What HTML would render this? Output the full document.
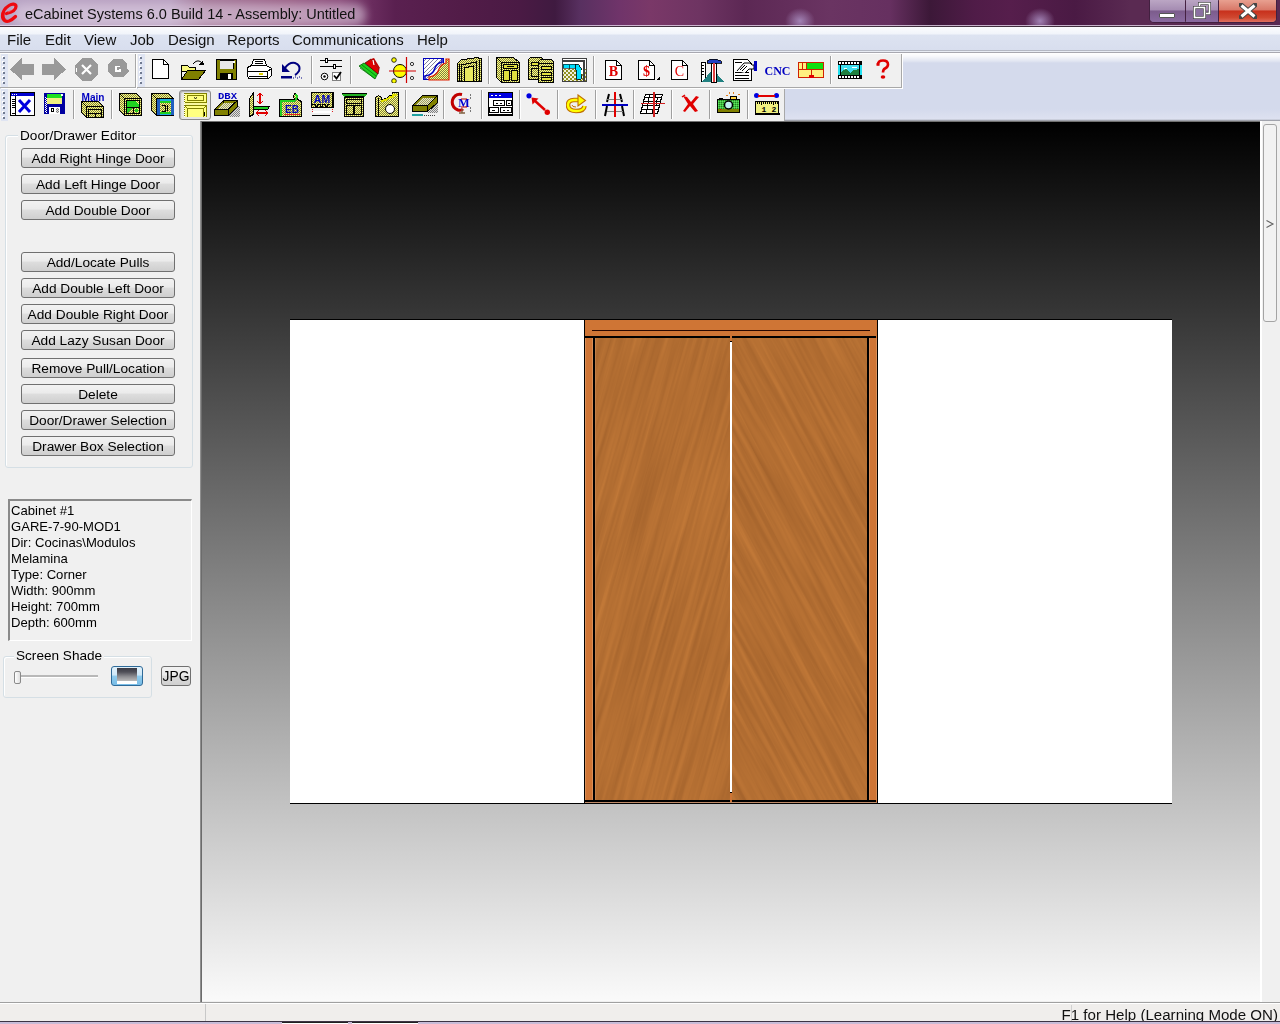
<!DOCTYPE html>
<html><head><meta charset="utf-8"><style>
*{margin:0;padding:0;box-sizing:border-box}
html,body{width:1280px;height:1024px;overflow:hidden;background:#f0f0f0;font-family:"Liberation Sans",sans-serif;position:relative;-webkit-font-smoothing:antialiased}
body>div{will-change:transform}
.a{position:absolute}
#title{left:0;top:0;width:1280px;height:26px;overflow:hidden;
background:linear-gradient(90deg,#b8a4c4 0,#b8a0c0 170px,#a47898 205px,#9a6086 290px,#8a4c7a 340px,#6a2c5e 372px,#5a2050 395px,#521c48 460px,#4a1a44 520px,#3f1a40 555px,#583060 580px,#70346a 620px,#7a3868 650px,#6e3462 700px,#5c2854 745px,#6a3462 830px,#663060 890px,#3c1838 930px,#501c48 975px,#561e4c 1010px,#4a1a44 1075px,#5a2a52 1130px,#5a2a52 1280px);}
#title .glow{left:14px;top:4px;width:352px;height:22px;border-radius:10px;background:rgba(225,212,230,.55);filter:blur(4px)}
#title .spot{top:8px;width:30px;height:26px;border-radius:50%;background:radial-gradient(closest-side,rgba(165,135,185,.95),rgba(165,135,185,0))}
#title .t{left:25px;top:6px;font-size:14.5px;color:#111;white-space:nowrap}
#tline{left:0;top:25px;width:1280px;height:2px;background:linear-gradient(rgba(230,215,235,.8) 0,rgba(230,215,235,.8) 1px,#40303e 1px)}
#menu{left:0;top:27px;width:1280px;height:27px;background:linear-gradient(#fbfcfe 0,#f1f4fa 7px,#dde3f1 8px,#d8deee 23px,#b4b8c4 23px,#b4b8c4 24px,#e8ecf4 24px,#e8ecf4 25px,#a8a8b0 25px,#a8a8b0 26px,#fff 26px)}
#menu span{position:absolute;top:4px;font-size:15px;color:#111;white-space:nowrap}
#rebar{left:0;top:53px;width:1280px;height:69px;background:linear-gradient(#fff 0,#f8f9fc 3px,#e2e6f2 8px,#d4daec 10px,#d4daec 56px,#dde1f0 66px,#b8bcc8 67px,#8a8a90 68px)}
.tb{position:absolute;background:#f0f0f0;border-right:1px solid #a8a8a8;border-bottom:1px solid #a8a8a8;box-shadow:1px 1px 0 #fff}
.grip{position:absolute;left:1px;width:7px;background-color:#dfe4f2;background-image:linear-gradient(135deg,transparent 0,transparent 45%,#6e7890 45%,#6e7890 100%);background-size:2px 2px;background-repeat:no-repeat}
.grip i{position:absolute;left:2px;width:2px;height:2px;background:#707a90;box-shadow:-1px -1px 0 #fff}
.sep{position:absolute;width:1px;background:#a8a8a8;border-right:1px solid #fff;box-sizing:content-box}
#left{left:0;top:121px;width:200px;height:881px;background:#f0f0f0}
#vline{left:200px;top:121px;width:2px;height:881px;background:linear-gradient(90deg,#a0a0a0,#5a5a5a)}
#view{left:202px;top:121px;width:1058px;height:880px;border-top:1px solid #707070;background:linear-gradient(#000 0,#fafafa 100%)}
#sb{left:1260px;top:121px;width:20px;height:881px;background:#f0f0f0;border-left:2px solid #fff}
#thumb{left:1263px;top:124px;width:14px;height:198px;border:1px solid #a4a4a4;border-radius:3px;background:#f2f2f2}
#status{left:0;top:1002px;width:1280px;height:19px;background:linear-gradient(#a0a0a0 0,#a0a0a0 1px,#fff 1px,#fff 2px,#f0eeec 2px);overflow:hidden}
#sbot{left:0;top:1021px;width:1280px;height:3px;background:linear-gradient(#3c3444 0,#3c3444 1px,#c8bcd8 1px)}
#status .t{right:2px;top:4px;font-size:15.1px;color:#111;white-space:nowrap}
.btn{position:absolute;left:21px;width:154px;height:20px;border:1px solid #707070;border-radius:3px;background:linear-gradient(#f2f2f2 0,#ebebeb 45%,#dddddd 50%,#cfcfcf 100%);font-size:13.7px;text-align:center;line-height:19px;color:#000;white-space:nowrap}
.gb{position:absolute;border:1px solid #d5dfe5;border-radius:3px;box-shadow:inset 1px 1px 0 #fff}
.gbl{position:absolute;background:#f0f0f0;font-size:13.6px;padding:0 2px;white-space:nowrap;line-height:15px}
#info{left:8px;top:499px;width:184px;height:142px;border-top:2px solid #8a8a8a;border-left:2px solid #8a8a8a;border-right:1px solid #fff;border-bottom:1px solid #fff;background:#f0f0f0}
#info div{position:absolute;left:1px;font-size:13.1px;white-space:nowrap;line-height:15px}
</style></head><body>
<div id="title" class="a"><div class="glow a"></div><div class="spot a" style="left:785px"></div><div class="spot a" style="left:1025px"></div>
<svg class="a" style="left:0px;top:2px" width="20" height="22" viewBox="0 0 20 22"><path d="M6.5 11.5 C10.5 10.5 16 8 16 4.5 C16 1.5 12 1.5 9 3.5 C5 6 2.5 10 2.5 14 C2.5 18.5 6 20 9 19 C11.5 18 13.5 16.5 15.5 14.5" fill="none" stroke="#ee0a10" stroke-width="3.2" stroke-linecap="round"/><path d="M4 9 C3 12 3 16 5 18" fill="none" stroke="#ee0a10" stroke-width="2.5"/><path d="M8 10 C11 9 13.5 7 13.5 5" fill="none" stroke="#ffd0d0" stroke-width=".6" opacity=".6"/></svg>
<div class="t a">eCabinet Systems 6.0 Build 14 - Assembly: Untitled</div>
<div class="a" style="left:1149px;top:0;width:128px;height:23px;border:1px solid rgba(60,30,60,.8);border-top:none;border-radius:0 0 5px 5px;overflow:hidden;box-shadow:inset 0 0 0 1px rgba(255,255,255,.35)">
<div class="a" style="left:0;top:0;width:35px;height:22px;background:linear-gradient(#bba6c4 0,#a58cb2 45%,#7c5c8c 50%,#8a6aa0 100%)"></div>
<div class="a" style="left:35px;top:0;width:1px;height:22px;background:rgba(60,30,60,.7)"></div>
<div class="a" style="left:36px;top:0;width:32px;height:22px;background:linear-gradient(#bba6c4 0,#a58cb2 45%,#7c5c8c 50%,#8a6aa0 100%)"></div>
<div class="a" style="left:68px;top:0;width:1px;height:22px;background:rgba(60,30,60,.7)"></div>
<div class="a" style="left:69px;top:0;width:59px;height:22px;background:linear-gradient(#e8a090 0,#d87868 45%,#c8301c 50%,#d04830 80%,#e07060 100%)"></div>
<div class="a" style="left:9px;top:13px;width:16px;height:5px;background:#fff;border:1px solid #555;border-radius:1px"></div>
<svg class="a" style="left:43px;top:2px" width="18" height="17"><rect x="6.5" y="1.5" width="10" height="10" fill="none" stroke="#444" stroke-width="3"/><rect x="6.5" y="1.5" width="10" height="10" fill="none" stroke="#fff" stroke-width="1.6"/><rect x="1.5" y="5.5" width="10" height="10" fill="#8a70a0" stroke="#444" stroke-width="3"/><rect x="1.5" y="5.5" width="10" height="10" fill="none" stroke="#fff" stroke-width="1.6"/></svg>
<svg class="a" style="left:89px;top:3px" width="18" height="16"><path d="M2 2 L16 14 M16 2 L2 14" stroke="#444" stroke-width="5" stroke-linecap="square"/><path d="M2.5 2.5 L15.5 13.5 M15.5 2.5 L2.5 13.5" stroke="#fff" stroke-width="3"/></svg>
</div>
</div><div id="tline" class="a"></div>
<div id="menu" class="a"><span style="left:7px">File</span><span style="left:45px">Edit</span><span style="left:84px">View</span><span style="left:130px">Job</span><span style="left:168px">Design</span><span style="left:227px">Reports</span><span style="left:292px">Communications</span><span style="left:417px">Help</span></div>
<div id="rebar" class="a"></div>
<div class="tb" style="left:0;top:54px;width:136px;height:34px"><div class="grip" style="top:0;height:33px;background-image:none"><i style="top:3px"></i><i style="top:8px"></i><i style="top:13px"></i><i style="top:18px"></i><i style="top:23px"></i><i style="top:28px"></i></div></div>
<div class="tb" style="left:137px;top:54px;width:765px;height:34px"><div class="grip" style="top:0;height:33px;background-image:none"><i style="top:3px"></i><i style="top:8px"></i><i style="top:13px"></i><i style="top:18px"></i><i style="top:23px"></i><i style="top:28px"></i></div></div>
<div class="tb" style="left:0;top:89px;width:785px;height:33px;border-bottom:none;box-shadow:none"><div class="grip" style="top:0;height:33px;background-image:none"><i style="top:3px"></i><i style="top:8px"></i><i style="top:13px"></i><i style="top:18px"></i><i style="top:23px"></i><i style="top:28px"></i></div></div>
<svg width="0" height="0" style="position:absolute"><defs>
<pattern id="dy" width="2" height="2" patternUnits="userSpaceOnUse"><rect width="2" height="2" fill="#ffff80"/><rect width="1" height="1" fill="#808040"/><rect x="1" y="1" width="1" height="1" fill="#808040"/></pattern>
<pattern id="dg" width="2" height="2" patternUnits="userSpaceOnUse"><rect width="2" height="2" fill="#e0e0e0"/><rect width="1" height="1" fill="#808080"/><rect x="1" y="1" width="1" height="1" fill="#808080"/></pattern>
<pattern id="do" width="2" height="2" patternUnits="userSpaceOnUse"><rect width="2" height="2" fill="#e8e8c8"/><rect width="1" height="1" fill="#a0a060"/><rect x="1" y="1" width="1" height="1" fill="#a0a060"/></pattern>
<pattern id="dgr" width="2" height="2" patternUnits="userSpaceOnUse"><rect width="2" height="2" fill="#40c040"/><rect width="1" height="1" fill="#208020"/><rect x="1" y="1" width="1" height="1" fill="#60e060"/></pattern>
<pattern id="dbl" width="2" height="2" patternUnits="userSpaceOnUse"><rect width="2" height="2" fill="#ffffff"/><rect width="1" height="1" fill="#0000a0"/><rect x="1" y="1" width="1" height="1" fill="#0000a0"/></pattern>
<pattern id="dco" width="4" height="4" patternUnits="userSpaceOnUse"><rect width="4" height="4" fill="#f0f0e0"/><rect width="2" height="2" fill="#909020"/><rect x="2" y="2" width="2" height="2" fill="#909020"/></pattern>
<pattern id="hatch" width="4" height="4" patternUnits="userSpaceOnUse"><rect width="4" height="4" fill="#fff"/><path d="M0 4 L4 0" stroke="#8080a0" stroke-width="1"/></pattern>
</defs></svg>
<svg class="a" style="left:10px;top:58px" width="25" height="23" viewBox="0 0 25 23" shape-rendering="crispEdges"><path d="M0 11.5 L12 0 V6 H24 V17 H12 V22 Z" fill="#999999"/></svg>
<svg class="a" style="left:42px;top:58px" width="25" height="23" viewBox="0 0 25 23" shape-rendering="crispEdges"><path d="M24 11.5 L12 0 V6 H0 V17 H12 V22 Z" fill="#999999"/></svg>
<svg class="a" style="left:75px;top:58px" width="24" height="24" viewBox="0 0 24 24" shape-rendering="crispEdges"><path d="M7 0 H16 L23 7 V16 L16 23 H7 L0 16 V7 Z" fill="#999999"/><path d="M7 7 L16 16 M16 7 L7 16" stroke="#fff" stroke-width="2.2" style="shape-rendering:auto"/><rect x="1" y="10" width="1" height="4" fill="#fff"/></svg>
<svg class="a" style="left:107px;top:58px" width="23" height="21" viewBox="0 0 23 21" shape-rendering="crispEdges"><path d="M6 1 H15 L20 6 V10 L22 13 L16 19 H6 L1 14 V6 Z" fill="#999999"/><path d="M9 8 H13 V9 H10 V12 H12 V11 H14 V14 H8 V8 Z" fill="#fff"/></svg>
<svg class="a" style="left:152px;top:59px" width="23" height="21" viewBox="0 0 23 21" shape-rendering="crispEdges"><path d="M0.5 0.5 H11.5 L16.5 5.5 V19.5 H0.5 Z" fill="#fff" stroke="#000"/><path d="M11.5 0.5 V5.5 H16.5" fill="none" stroke="#000"/><text x="8.5" y="16" text-anchor="middle" font-family="Liberation Serif" font-weight="bold" font-size="13" fill="#e00000" style="shape-rendering:auto"></text></svg>
<svg class="a" style="left:181px;top:59px" width="25" height="22" viewBox="0 0 25 22" shape-rendering="crispEdges"><path d="M0.5 6.5 H6.5 L8.5 8.5 H14.5 V12.5 H0.5 Z" fill="#f8f880" stroke="#000"/><path d="M0.5 20.5 L6.5 11.5 H24.5 L17.5 20.5 Z" fill="#808000" stroke="#000"/><path d="M0.5 8 V20.5" stroke="#000"/><path d="M12 5 Q16 0 20 3" fill="none" stroke="#000" style="shape-rendering:auto"/><path d="M18 6 L23 6 L22 1 Z" fill="#000"/></svg>
<svg class="a" style="left:216px;top:59px" width="21" height="21" viewBox="0 0 21 21" shape-rendering="crispEdges"><rect x="0.5" y="0.5" width="20" height="20" fill="#808000" stroke="#000"/><rect x="4" y="1" width="13" height="9" fill="#e8e8e8"/><rect x="4" y="1" width="13" height="1" fill="#000"/><rect x="17" y="1" width="1" height="9" fill="#000"/><rect x="4" y="14" width="13" height="7" fill="#000"/><rect x="12" y="15" width="3" height="5" fill="#fff"/><rect x="17" y="2" width="2" height="2" fill="#fff"/></svg>
<svg class="a" style="left:247px;top:59px" width="25" height="21" viewBox="0 0 25 21" shape-rendering="crispEdges"><path d="M6.5 0.5 H17.5 L19.5 6.5 H4.5 Z" fill="#fff" stroke="#000"/><path d="M8 2.5 H16 M8 4.5 H16" stroke="#000"/><path d="M0.5 8.5 L4.5 6.5 H19.5 L24.5 9.5 V16.5 L21.5 19.5 H1.5 L0.5 16.5 Z" fill="#fff" stroke="#000"/><path d="M0.5 12.5 H20.5 L24.5 9.5" fill="none" stroke="#000"/><path d="M20.5 12.5 V19.5" stroke="#000"/><rect x="12" y="14" width="4" height="2" fill="#e0d000"/><path d="M2 17.5 H20" stroke="#000"/></svg>
<svg class="a" style="left:281px;top:61px" width="22" height="19" viewBox="0 0 22 19"><path d="M4 7 Q8 1 14 2 Q20 4 18 10 Q16 13 14 14" fill="none" stroke="#000080" stroke-width="2"/><path d="M1 3 L1 11 L9 11 Z" fill="#000080"/><rect x="0" y="15" width="11" height="2.5" fill="#000080"/><path d="M12 17 h1 M14 16 h1 M16 17 h1 M18 16 h1 M20 17 h1" stroke="#000080" stroke-width="1"/></svg>
<div class="a" style="left:311px;top:56px;width:1px;height:28px;background:#a0a0a0;box-shadow:1px 0 0 #fff"></div>
<svg class="a" style="left:320px;top:58px" width="23" height="23" viewBox="0 0 23 23" shape-rendering="crispEdges"><rect x="0" y="2" width="22" height="1" fill="#000"/><rect x="5.5" y="0.5" width="2" height="4" fill="#fff" stroke="#000"/><rect x="0" y="8" width="22" height="1" fill="#000"/><rect x="13.5" y="6.5" width="2" height="4" fill="#fff" stroke="#000"/><circle cx="4.5" cy="18.5" r="3.3" fill="#fff" stroke="#000" style="shape-rendering:auto"/><circle cx="4.5" cy="18.5" r="1.2" fill="#000" style="shape-rendering:auto"/><rect x="12.5" y="14.5" width="8" height="8" fill="#fff" stroke="#808080"/><path d="M14 17.5 L16.5 20.5 L21 14" fill="none" stroke="#000" stroke-width="1.8" style="shape-rendering:auto"/></svg>
<div class="a" style="left:350px;top:56px;width:1px;height:28px;background:#a0a0a0;box-shadow:1px 0 0 #fff"></div>
<svg class="a" style="left:359px;top:57px" width="22" height="24" viewBox="0 0 22 24"><path d="M0 9 L5 6 L19 16 L16 22 Z" fill="#20d020" stroke="#006000" stroke-width=".8"/><path d="M1 11 L15 21 M3 8 L17 19" stroke="#008000" stroke-width=".8"/><path d="M6 6 L12 2 L20 12 L19 17 Z" fill="#e00000" stroke="#600000" stroke-width=".8"/><path d="M12 2 L15 1 L21 11 L20 12 Z" fill="#c00000"/><path d="M14 3 L15 8" stroke="#fff" stroke-width="1.2"/></svg>
<svg class="a" style="left:389px;top:57px" width="28" height="26" viewBox="0 0 28 26"><circle cx="11" cy="14" r="6.5" fill="#ffff00" stroke="#000" stroke-width="1"/><circle cx="5" cy="3" r="2.3" fill="#ffff00" stroke="#000" stroke-width=".8"/><circle cx="5" cy="24" r="2.3" fill="#ffff00" stroke="#000" stroke-width=".8"/><circle cx="23" cy="7" r="1.6" fill="#fff" stroke="#000" stroke-width=".8"/><circle cx="23" cy="21" r="1.6" fill="#fff" stroke="#000" stroke-width=".8"/><path d="M0 14 H27 M17.5 0 V26" stroke="#d00000" stroke-width="1.2"/></svg>
<svg class="a" style="left:423px;top:58px" width="27" height="23" viewBox="0 0 27 23" shape-rendering="crispEdges"><rect x="0.5" y="0.5" width="20" height="21" fill="url(#hatch)" stroke="#0000c0"/><path d="M2 21 V18 Q10 17 12 10 Q14 5 19 4 V1" fill="none" stroke="#0000c0" stroke-width="1.5" style="shape-rendering:auto"/><path d="M6 22 V19 Q14 18 16 11 Q18 6 23 5 V1 H26 V22 Z" fill="url(#dy)" stroke="#e02000" stroke-width="1.2" style="shape-rendering:auto"/></svg>
<svg class="a" style="left:457px;top:57px" width="25" height="25" viewBox="0 0 25 25" shape-rendering="crispEdges"><path d="M0.5 24.5 V6.5 L4 3 L20 0.5 L24.5 2 V24.5 Z" fill="url(#dy)" stroke="#000"/><path d="M4 24 V8 L19 5 V24" fill="none" stroke="#000"/><path d="M7 24 V11 L16 9 V24 Z" fill="#e8e860" stroke="#000"/><path d="M2 24 V7 M22 24 V3" stroke="#000"/></svg>
<div class="a" style="left:488px;top:56px;width:1px;height:28px;background:#a0a0a0;box-shadow:1px 0 0 #fff"></div>
<svg class="a" style="left:496px;top:57px" width="24" height="26" viewBox="0 0 24 26" shape-rendering="crispEdges"><path d="M0.5 0.5 H17.5 L23.5 5.5 V25.5 H5.5 L0.5 20.5 Z" fill="url(#dy)" stroke="#000"/><path d="M0.5 0.5 L5.5 5.5 H23.5 M5.5 5.5 V25.5" fill="none" stroke="#000"/><rect x="7.5" y="7.5" width="14" height="4" fill="#e0e040" stroke="#000"/><rect x="7.5" y="13.5" width="6" height="10" fill="#e0e040" stroke="#000"/><rect x="15.5" y="13.5" width="6" height="10" fill="#e0e040" stroke="#000"/><path d="M11 9.5 H18" stroke="#000"/></svg>
<svg class="a" style="left:528px;top:57px" width="26" height="26" viewBox="0 0 26 26" shape-rendering="crispEdges"><path d="M0.5 2.5 L2.5 0.5 H13.5 L15.5 2.5 V22.5 H0.5 Z" fill="url(#dy)" stroke="#000"/><rect x="3.5" y="5.5" width="9" height="3" fill="#e0e040" stroke="#000"/><rect x="3.5" y="11.5" width="9" height="8" fill="url(#dy)" stroke="#000"/><path d="M10.5 4.5 L12.5 2.5 H23.5 L25.5 4.5 V25.5 H10.5 Z" fill="url(#dy)" stroke="#000"/><path d="M10.5 6.5 H25.5" stroke="#000"/><rect x="13.5" y="9.5" width="10" height="3" fill="#e0e040" stroke="#000"/><rect x="13.5" y="15.5" width="10" height="3" fill="#e0e040" stroke="#000"/><rect x="13.5" y="20.5" width="10" height="3" fill="#e0e040" stroke="#000"/></svg>
<svg class="a" style="left:562px;top:58px" width="25" height="24" viewBox="0 0 25 24" shape-rendering="crispEdges"><rect x="0" y="0" width="25" height="24" fill="url(#dco)"/><rect x="0" y="0" width="25" height="11" fill="#fff"/><rect x="0.5" y="0.5" width="24" height="23" fill="none" stroke="#404040"/><rect x="1" y="2" width="22" height="2" fill="#404040"/><rect x="21" y="2" width="2" height="21" fill="#404040"/><rect x="1" y="6" width="6" height="4" fill="#00e0ff" stroke="#000" stroke-width=".6"/><rect x="7" y="6" width="6" height="4" fill="#00e0ff" stroke="#000" stroke-width=".6"/><path d="M13 6 H16 L19 10 V21 H14 V12 L13 10 Z" fill="#00e0ff" stroke="#000" stroke-width=".8"/><rect x="2" y="4" width="4" height="2" fill="#fff"/><rect x="8" y="4" width="4" height="2" fill="#fff"/><rect x="19" y="12" width="2" height="4" fill="#fff"/></svg>
<div class="a" style="left:593px;top:56px;width:1px;height:28px;background:#a0a0a0;box-shadow:1px 0 0 #fff"></div>
<svg class="a" style="left:605px;top:60px" width="23" height="21" viewBox="0 0 23 21" shape-rendering="crispEdges"><path d="M0.5 0.5 H11.5 L16.5 5.5 V19.5 H0.5 Z" fill="#fff" stroke="#000"/><path d="M11.5 0.5 V5.5 H16.5" fill="none" stroke="#000"/><text x="8.5" y="16" text-anchor="middle" font-family="Liberation Serif" font-weight="bold" font-size="14" fill="#e00000" style="shape-rendering:auto">B</text></svg>
<svg class="a" style="left:638px;top:60px" width="23" height="21" viewBox="0 0 23 21" shape-rendering="crispEdges"><path d="M0.5 0.5 H11.5 L16.5 5.5 V19.5 H0.5 Z" fill="#fff" stroke="#000"/><path d="M11.5 0.5 V5.5 H16.5" fill="none" stroke="#000"/><text x="8.5" y="16" text-anchor="middle" font-family="Liberation Serif" font-weight="bold" font-size="14" fill="#e00000" style="shape-rendering:auto">$</text><path d="M18 20 L22 16 L22 20 Z" fill="#000"/></svg>
<svg class="a" style="left:671px;top:60px" width="23" height="21" viewBox="0 0 23 21" shape-rendering="crispEdges"><path d="M0.5 0.5 H11.5 L16.5 5.5 V19.5 H0.5 Z" fill="#fff" stroke="#000"/><path d="M11.5 0.5 V5.5 H16.5" fill="none" stroke="#000"/><text x="8.5" y="16" text-anchor="middle" font-family="Liberation Serif" font-weight="normal" font-size="14" fill="#e00000" style="shape-rendering:auto">C</text></svg>
<svg class="a" style="left:701px;top:58px" width="24" height="25" viewBox="0 0 24 25" shape-rendering="crispEdges"><path d="M0.5 4.5 H4.5 V19.5 H16.5 V23.5 H0.5 Z" fill="#fff" stroke="#000"/><path d="M1 7 h2 M1 10 h2 M1 13 h2 M1 16 h2 M6 21 v2 M9 21 v2 M12 21 v2" stroke="#000"/><path d="M1 24 L12 11 L23 24 Z" fill="#208080"/><path d="M6 3 Q12 -1 20 3 L21 5 H6 Z" fill="#2040c0" stroke="#000" stroke-width=".8"/><rect x="10.5" y="5" width="5" height="19" fill="#fff" stroke="#000"/><rect x="12" y="5" width="2" height="19" fill="#e04040"/></svg>
<svg class="a" style="left:733px;top:59px" width="25" height="23" viewBox="0 0 25 23" shape-rendering="crispEdges"><path d="M0.5 0.5 H14.5 L18.5 4.5 V21.5 H0.5 Z" fill="#fff" stroke="#000"/><path d="M2 3.5 H9 M2 13.5 H16 M2 16.5 H16 M2 19.5 H16" stroke="#000"/><path d="M4 12 L11 4 H17 L19 6 H21 V10 H16 L12 14" fill="#fff" stroke="#000" style="shape-rendering:auto"/><path d="M7 11 L12 6 M9 12 L14 7" stroke="#000" style="shape-rendering:auto"/><rect x="21" y="2" width="3" height="10" fill="#0000c0"/></svg>
<svg class="a" style="left:764px;top:63px" width="28" height="14" viewBox="0 0 28 14"><text x="0.5" y="11.5" font-family="Liberation Serif" font-weight="bold" font-size="12.5" fill="#0000c0" textLength="26" lengthAdjust="spacingAndGlyphs">CNC</text></svg>
<svg class="a" style="left:798px;top:62px" width="26" height="17" viewBox="0 0 26 17" shape-rendering="crispEdges"><rect x="0.5" y="0.5" width="25" height="15" fill="#fff080" stroke="#d02000"/><rect x="9" y="1" width="16" height="6" fill="#10e010"/><path d="M0.5 7.5 H25.5 M4.5 0.5 V7.5 M8.5 0.5 V7.5 M13.5 7.5 V13" stroke="#d02000"/><rect x="11" y="13" width="5" height="3" fill="#e00000"/></svg>
<div class="a" style="left:830px;top:56px;width:1px;height:28px;background:#a0a0a0;box-shadow:1px 0 0 #fff"></div>
<svg class="a" style="left:838px;top:61px" width="24" height="18" viewBox="0 0 24 18" shape-rendering="crispEdges"><rect x="0" y="0" width="24" height="18" fill="#000"/><g fill="#fff"><rect x="1" y="1" width="2" height="2"/><rect x="4" y="1" width="2" height="2"/><rect x="7" y="1" width="2" height="2"/><rect x="10" y="1" width="2" height="2"/><rect x="13" y="1" width="2" height="2"/><rect x="16" y="1" width="2" height="2"/><rect x="19" y="1" width="2" height="2"/><rect x="1" y="15" width="2" height="2"/><rect x="4" y="15" width="2" height="2"/><rect x="7" y="15" width="2" height="2"/><rect x="10" y="15" width="2" height="2"/><rect x="13" y="15" width="2" height="2"/><rect x="16" y="15" width="2" height="2"/><rect x="19" y="15" width="2" height="2"/></g><rect x="0" y="4" width="24" height="10" fill="#20e0f0"/><rect x="3" y="4" width="18" height="10" fill="#40e0f0"/><path d="M3 14 L3 11 L8 8 L12 12 L16 9 L21 8 V14 Z" fill="#208040"/><path d="M6 7 H9 M14 6 H19" stroke="#fff"/><rect x="21" y="4" width="1" height="10" fill="#000"/><rect x="2" y="4" width="1" height="10" fill="#000"/></svg>
<svg class="a" style="left:876px;top:59px" width="15" height="21" viewBox="0 0 15 21"><path d="M2 5.5 Q2 1.5 7 1.5 Q12 1.5 12 5.5 Q12 8 9 9.5 Q7 10.5 7 13.5" fill="none" stroke="#e00000" stroke-width="2.6"/><ellipse cx="7" cy="18" rx="2.3" ry="1.8" fill="#e00000"/><path d="M0.5 5.5 h3" stroke="#e00000" stroke-width="2.6"/></svg>
<svg class="a" style="left:10px;top:92px" width="25" height="24" viewBox="0 0 25 24" shape-rendering="crispEdges"><rect x="0.5" y="0.5" width="24" height="23" fill="#fff" stroke="#000"/><rect x="1" y="1" width="23" height="3" fill="#0000d0"/><g fill="#fff"><rect x="2" y="2" width="1" height="1"/><rect x="4" y="2" width="1" height="1"/><rect x="6" y="2" width="1" height="1"/></g><path d="M5.5 4 V23" stroke="#000"/><path d="M2 7 h3 M2 9 h3 M2 11 h3 M2 13 h3 M2 15 h3 M2 21 h3" stroke="#000"/><path d="M9 8 L20 20 M20 8 L9 20" stroke="#0000e0" stroke-width="3" style="shape-rendering:auto"/></svg>
<svg class="a" style="left:44px;top:93px" width="21" height="21" viewBox="0 0 21 21" shape-rendering="crispEdges"><rect x="0" y="0" width="21" height="21" fill="#0000a0"/><rect x="3" y="1" width="15" height="10" fill="#f0f080"/><rect x="3" y="1" width="15" height="4" fill="#20e020"/><rect x="17" y="1" width="2" height="2" fill="#fff"/><rect x="5" y="14" width="11" height="7" fill="#fff"/><rect x="7" y="15" width="3" height="4" fill="#000"/><rect x="8" y="16" width="1" height="2" fill="#fff"/><rect x="12" y="15" width="3" height="5" fill="url(#dg)"/><rect x="1" y="4" width="2" height="16" fill="url(#dbl)"/></svg>
<div class="a" style="left:73px;top:90px;width:1px;height:29px;background:#a0a0a0;box-shadow:1px 0 0 #fff"></div>
<svg class="a" style="left:81px;top:91px" width="24" height="27" viewBox="0 0 24 27"><text x="12" y="9.5" text-anchor="middle" font-family="Liberation Sans" font-weight="bold" font-size="11.5" fill="#0000c0" textLength="23" lengthAdjust="spacingAndGlyphs">Main</text></svg>
<svg class="a" style="left:81px;top:101px" width="23" height="17" viewBox="0 0 23 17" shape-rendering="crispEdges"><path d="M0.5 0.5 H17.5 L22.5 5.5 V16.5 H5.5 L0.5 11.5 Z" fill="url(#dy)" stroke="#000"/><path d="M0.5 0.5 L5.5 5.5 H22.5 M5.5 5.5 V16.5" fill="none" stroke="#000"/><rect x="7.5" y="8.5" width="13" height="8" fill="url(#dy)" stroke="#000"/><path d="M7.5 12.5 H20.5 M14 12.5 V16.5" stroke="#000"/></svg>
<div class="a" style="left:111px;top:90px;width:1px;height:29px;background:#a0a0a0;box-shadow:1px 0 0 #fff"></div>
<svg class="a" style="left:119px;top:93px" width="24" height="24" viewBox="0 0 24 24" shape-rendering="crispEdges"><path d="M0.5 0.5 H17.5 L22.5 5.5 V22.5 H5.5 L0.5 17.5 Z" fill="url(#dy)" stroke="#000"/><path d="M0.5 0.5 L5.5 5.5 H22.5 M5.5 5.5 V22.5" fill="none" stroke="#000"/><rect x="7.5" y="7.5" width="13" height="13" fill="url(#dy)" stroke="#000"/><path d="M8 8 H16 L20 12 V14 H8 Z" fill="#20d020"/><path d="M8 15 H13 L8 20 Z" fill="#20d020"/><path d="M8 14.5 H20 M14.5 14.5 V20" stroke="#000"/><circle cx="17.5" cy="17.5" r="1.8" fill="#20d020" style="shape-rendering:auto"/></svg>
<svg class="a" style="left:151px;top:93px" width="24" height="24" viewBox="0 0 24 24" shape-rendering="crispEdges"><path d="M0.5 0.5 H17.5 L22.5 5.5 V22.5 H5.5 L0.5 17.5 Z" fill="url(#dy)" stroke="#000"/><path d="M0.5 0.5 L5.5 5.5 H22.5 M5.5 5.5 V22.5" fill="none" stroke="#000"/><rect x="6" y="6" width="17" height="17" fill="#20b0e0"/><rect x="6" y="6" width="3" height="17" fill="#2060c0"/><rect x="20" y="6" width="3" height="17" fill="#2060c0"/><rect x="9" y="8" width="11" height="13" fill="url(#dy)"/><rect x="9" y="8" width="11" height="2" fill="#20d020"/><rect x="9" y="19" width="11" height="2" fill="#20d020"/><path d="M11 12 h3 v6 h-3 M16 12 v6" fill="none" stroke="#000"/><path d="M5.5 5.5 V22.5 H22.5" fill="none" stroke="#000"/></svg>
<div class="a" style="left:179px;top:90px;width:32px;height:30px;border:1px solid #8a8a8a;border-radius:3px;background:#e6e6e6;box-shadow:inset 1px 1px 1px #b0b0b0"></div>
<svg class="a" style="left:184px;top:93px" width="24" height="24" viewBox="0 0 24 24" shape-rendering="crispEdges"><rect x="0" y="0" width="23" height="24" fill="#f8f8a0"/><rect x="0.5" y="0.5" width="22" height="9" fill="#ffff80" stroke="#808000"/><rect x="3.5" y="2.5" width="16" height="5" fill="#ffff80" stroke="#808000"/><path d="M10 4.5 Q11.5 6.5 13 4.5" fill="none" stroke="#000" style="shape-rendering:auto"/><path d="M0.5 24 V12.5 H22.5 V24" fill="#ffff80" stroke="#808000"/><path d="M3.5 24 V15.5 H19.5 V24" fill="none" stroke="#808000"/><path d="M1 13 L3.5 15.5 M22 13 L19.5 15.5" stroke="#808000"/><rect x="20" y="19" width="1" height="4" fill="#000"/><path d="M0 1 V24" stroke="#fff" stroke-dasharray="1 1"/></svg>
<svg class="a" style="left:217px;top:91px" width="21" height="9" viewBox="0 0 21 9"><text x="10.5" y="7.8" text-anchor="middle" font-family="Liberation Mono" font-weight="bold" font-size="9.5" fill="#0000c0" textLength="19" lengthAdjust="spacingAndGlyphs">DBX</text></svg>
<svg class="a" style="left:214px;top:100px" width="26" height="18" viewBox="0 0 26 18" shape-rendering="crispEdges"><path d="M15 15.5 L24 6 L26 6 V17 H15 Z" fill="url(#dg)"/><path d="M0.5 9.5 L9.5 0.5 H23.5 V6.5 L14.5 15.5 H0.5 Z" fill="#808000" stroke="#000"/><path d="M3 9 L10 2.5 H21 L14 9 Z" fill="url(#do)"/><path d="M9.5 0.5 V3 M3 9 H14 L23.5 0.5" fill="none" stroke="#000"/><path d="M0.5 9.5 H14.5 L23.5 0.5 M14.5 9.5 V15.5" fill="none" stroke="#000"/></svg>
<svg class="a" style="left:249px;top:92px" width="21" height="25" viewBox="0 0 21 25" shape-rendering="crispEdges"><path d="M0.5 6.5 L4.5 0.5 V22.5 L0.5 24.5 Z" fill="url(#dy)" stroke="#000"/><path d="M4 14.5 H20.5 L18.5 17.5 H4 Z" fill="#20d020" stroke="#000"/><path d="M11 1 V12 M8 4 L11 1 L14 4 M8 9 L11 12 L14 9" fill="none" stroke="#e00000" stroke-width="1.3"/><path d="M7 21 H19 M10 18 L7 21 L10 24 M16 18 L19 21 L16 24" fill="none" stroke="#e00000" stroke-width="1.3"/></svg>
<svg class="a" style="left:279px;top:93px" width="23" height="24" viewBox="0 0 23 24" shape-rendering="crispEdges"><path d="M0.5 6.5 H15.5 L14 3 L16 0.5 L18 3 L18.5 6.5 L22.5 8.5 V23.5 H0.5 Z" fill="url(#dy)" stroke="#000"/><rect x="1" y="7" width="2" height="16" fill="#20d020"/><rect x="1" y="7" width="15" height="2" fill="#20d020"/><path d="M16 7 Q19 5 17 1" fill="none" stroke="#20d020" stroke-width="2"/><text x="13" y="20" text-anchor="middle" font-family="Liberation Sans" font-weight="bold" font-size="10" fill="#0000c0" style="shape-rendering:auto">EB</text><rect x="5" y="21" width="16" height="1" fill="#e02020"/></svg>
<svg class="a" style="left:311px;top:92px" width="23" height="24" viewBox="0 0 23 24" shape-rendering="crispEdges"><rect x="0.5" y="0.5" width="21" height="15" fill="url(#dy)" stroke="#000"/><rect x="21" y="0" width="2" height="16" fill="#000"/><text x="11" y="10.5" text-anchor="middle" font-family="Liberation Sans" font-weight="bold" font-size="10.5" fill="#0000c0" style="shape-rendering:auto">AM</text><path d="M1 12 h3 v2 h2 v-2 h3 v2 h2 v-2 h3 v2 h2 v-2 h3" fill="none" stroke="#000"/><path d="M1 17 V20 M21 17 V20" stroke="#e02020" stroke-dasharray="1 1"/><path d="M1 22.5 H20 L19 23.5 H1 Z" fill="#000"/><rect x="2" y="19" width="18" height="2" fill="#fff"/></svg>
<svg class="a" style="left:342px;top:93px" width="25" height="24" viewBox="0 0 25 24" shape-rendering="crispEdges"><path d="M0 0 H25 V2 L22 4 H3 L0 2 Z" fill="#20b020"/><path d="M0 0.5 H25 M3 3.5 H22" stroke="#000"/><rect x="2.5" y="4.5" width="19" height="19" fill="url(#dy)" stroke="#000"/><rect x="4.5" y="6.5" width="15" height="4" fill="url(#dy)" stroke="#000"/><rect x="4.5" y="12.5" width="7" height="9" fill="url(#dy)" stroke="#000"/><rect x="12.5" y="12.5" width="7" height="9" fill="url(#dy)" stroke="#000"/></svg>
<svg class="a" style="left:375px;top:92px" width="24" height="25" viewBox="0 0 24 25" shape-rendering="crispEdges"><path d="M0.5 24.5 V5.5 L3.5 3.5 L6.5 5.5 V7.5 L11.5 6.5 L14.5 3.5 H17.5 V0.5 H23.5 V24.5 Z" fill="url(#dy)" stroke="#000"/><path d="M6 9 L11 8 L15 5 H18 V3 H22" fill="none" stroke="#e0e000" stroke-width="2"/><circle cx="15" cy="17" r="4.5" fill="#fff" stroke="#000" style="shape-rendering:auto"/><path d="M3 6 V24" stroke="#000"/></svg>
<div class="a" style="left:405px;top:90px;width:1px;height:29px;background:#a0a0a0;box-shadow:1px 0 0 #fff"></div>
<svg class="a" style="left:412px;top:94px" width="26" height="24" viewBox="0 0 26 24" shape-rendering="crispEdges"><path d="M16 17.5 L25 8 L26 8 V19 H16 Z" fill="url(#dg)"/><path d="M0.5 11.5 L10.5 1.5 H25.5 V8.5 L15.5 17.5 H0.5 Z" fill="#808000" stroke="#000"/><path d="M3 11 L11 3.5 H23 L15 11 Z" fill="url(#do)"/><path d="M0.5 11.5 H15.5 L25.5 1.5 M15.5 11.5 V17.5" fill="none" stroke="#000"/><rect x="0" y="20" width="11" height="2" fill="#20a0a0"/><path d="M12 21 h1 M14 21 h1 M16 21 h1 M18 21 h1 M20 21 h1 M22 21 h1" stroke="#404040"/></svg>
<div class="a" style="left:443px;top:90px;width:1px;height:29px;background:#a0a0a0;box-shadow:1px 0 0 #fff"></div>
<svg class="a" style="left:450px;top:92px" width="24" height="23" viewBox="0 0 24 23"><path d="M12 2.5 Q5 1 2.5 8 Q1 15 8 18 Q11 19 13 17" fill="none" stroke="#c00000" stroke-width="3"/><text x="14" y="14.5" text-anchor="middle" font-family="Liberation Serif" font-weight="bold" font-size="12" fill="#0000d0">M</text><path d="M11 7 H17 M11 15 H17" stroke="#c00000" stroke-width="1.2"/><path d="M12 17 V21 M9 21 H15" stroke="#806040" stroke-width="1.3"/><path d="M20 3 h2 M20 6 h2 M20 16 h2 M20 19 h2" stroke="#000" stroke-dasharray="1 1"/></svg>
<div class="a" style="left:481px;top:90px;width:1px;height:29px;background:#a0a0a0;box-shadow:1px 0 0 #fff"></div>
<svg class="a" style="left:488px;top:92px" width="26" height="25" viewBox="0 0 26 25" shape-rendering="crispEdges"><rect x="0.5" y="0.5" width="24" height="23" fill="#fff" stroke="#000"/><rect x="1" y="1" width="23" height="5" fill="#0000e0"/><path d="M3 3.5 h2 M7 3.5 h2 M11 3.5 h2" stroke="#fff"/><rect x="5.5" y="8.5" width="11" height="5" fill="#fff" stroke="#000"/><rect x="18.5" y="8.5" width="5" height="5" fill="#fff" stroke="#000"/><rect x="1.5" y="15.5" width="9" height="5" fill="#fff" stroke="#000"/><rect x="12.5" y="15.5" width="11" height="5" fill="#fff" stroke="#000"/><path d="M8 11 h2 M12 11 h2 M20 11 h2 M4 18 h3 M15 18 h2 M19 18 h2" stroke="#000"/><rect x="1" y="22" width="23" height="2" fill="#000"/></svg>
<div class="a" style="left:519px;top:90px;width:1px;height:29px;background:#a0a0a0;box-shadow:1px 0 0 #fff"></div>
<svg class="a" style="left:526px;top:93px" width="24" height="22" viewBox="0 0 24 22"><circle cx="3" cy="2.8" r="2.6" fill="#0000e0"/><circle cx="21.3" cy="19.3" r="2.7" fill="#e00000"/><path d="M8 7 L19 17" stroke="#e00000" stroke-width="2.4"/><path d="M5.5 4.5 L12.5 5.5 L6.5 11.5 Z" fill="#e00000"/></svg>
<div class="a" style="left:557px;top:90px;width:1px;height:29px;background:#a0a0a0;box-shadow:1px 0 0 #fff"></div>
<svg class="a" style="left:566px;top:94px" width="21" height="20" viewBox="0 0 21 20"><path d="M12 6 H8 Q2 6 2 11 Q2 17 10 17 Q18 17 18.5 12" fill="none" stroke="#c07000" stroke-width="4.6"/><path d="M12 6 H8 Q2 6 2 11 Q2 17 10 17 Q18 17 18.5 12" fill="none" stroke="#ffff00" stroke-width="2.4"/><path d="M12 1 L19.5 6.5 L12 12 Z" fill="#ffff00" stroke="#c07000" stroke-width="1.1"/><path d="M6 11 Q6 13 10 13" fill="none" stroke="#c07000" stroke-width="1"/></svg>
<div class="a" style="left:595px;top:90px;width:1px;height:29px;background:#a0a0a0;box-shadow:1px 0 0 #fff"></div>
<svg class="a" style="left:602px;top:92px" width="26" height="25" viewBox="0 0 26 25" shape-rendering="crispEdges"><path d="M3 24 L5 14 M5 10 L7 2 M22 24 L20 14 M20 10 L18 2" stroke="#000" stroke-width="2" style="shape-rendering:auto"/><rect x="5" y="7" width="16" height="1" fill="#808080"/><rect x="5" y="19" width="16" height="1" fill="#808080"/><rect x="12" y="0" width="2" height="25" fill="#e00000"/><rect x="0" y="12" width="26" height="1.5" fill="#0000c0"/></svg>
<div class="a" style="left:633px;top:90px;width:1px;height:29px;background:#a0a0a0;box-shadow:1px 0 0 #fff"></div>
<svg class="a" style="left:640px;top:92px" width="25" height="25" viewBox="0 0 25 25" shape-rendering="crispEdges"><g fill="#fff" stroke="#000"><path d="M5.5 2.5 H22.5 L21.5 5.5 H4.5 Z"/><path d="M4.5 5.5 H21.5 L20.5 9.5 H3.5 Z"/><path d="M3.5 9.5 H20.5 L19.5 13.5 H2.5 Z"/><path d="M2.5 13.5 H19.5 L18.5 17.5 H1.5 Z"/><path d="M1.5 17.5 H18.5 L17.5 21.5 H0.5 Z"/></g><path d="M9.5 2.5 L6.5 21.5 M15.5 2.5 L12.5 21.5 M17.5 5.5 L16 13.5" stroke="#000"/><path d="M14 0 V25 M1 11.5 H25" stroke="#d02020" stroke-width="1.2"/></svg>
<div class="a" style="left:671px;top:90px;width:1px;height:29px;background:#a0a0a0;box-shadow:1px 0 0 #fff"></div>
<svg class="a" style="left:681px;top:94px" width="20" height="20" viewBox="0 0 20 20"><path d="M2 2 L6 3 L10 8 L15 2 L18 3 L12 10 L17 17 L14 18 L9 12 L4 18 L2 17 L7 10 Z" fill="#e00000"/><path d="M1 3 L4 1" stroke="#e00000" stroke-width="1.5"/></svg>
<div class="a" style="left:709px;top:90px;width:1px;height:29px;background:#a0a0a0;box-shadow:1px 0 0 #fff"></div>
<svg class="a" style="left:717px;top:92px" width="24" height="22" viewBox="0 0 24 22" shape-rendering="crispEdges"><g fill="#e08020"><rect x="12" y="0" width="1" height="2"/><rect x="16" y="0" width="1" height="2"/><rect x="21" y="2" width="2" height="1"/><rect x="9" y="3" width="2" height="1"/></g><rect x="13.5" y="4.5" width="6" height="4" fill="#ffd040" stroke="#000"/><rect x="2" y="6" width="4" height="2" fill="#000"/><rect x="0.5" y="7.5" width="22" height="13" fill="url(#dgr)" stroke="#000"/><rect x="1" y="17" width="21" height="3" fill="#808000"/><circle cx="11.5" cy="13" r="4" fill="#c0f0f0" stroke="#000" stroke-width="1.5" style="shape-rendering:auto"/><rect x="3" y="17" width="1" height="1" fill="#e00000"/></svg>
<div class="a" style="left:747px;top:90px;width:1px;height:29px;background:#a0a0a0;box-shadow:1px 0 0 #fff"></div>
<svg class="a" style="left:754px;top:93px" width="26" height="23" viewBox="0 0 26 23" shape-rendering="crispEdges"><circle cx="2.5" cy="2.5" r="2.5" fill="#0000e0" style="shape-rendering:auto"/><circle cx="22.5" cy="2.5" r="2.5" fill="#0000e0" style="shape-rendering:auto"/><rect x="4" y="1.5" width="17" height="2" fill="#e00000"/><rect x="1.5" y="8.5" width="23" height="12" fill="#f0f080" stroke="#000"/><rect x="1" y="20" width="25" height="2" fill="#000"/><path d="M3 9 v2 M5 9 v2 M7 9 v3 M9 9 v2 M11 9 v2 M13 9 v2 M15 9 v2 M17 9 v2 M19 9 v3 M21 9 v2 M23 9 v2" stroke="#000"/><text x="10" y="18.5" text-anchor="middle" font-family="Liberation Mono" font-weight="bold" font-size="8" fill="#000" style="shape-rendering:auto">1</text><text x="20" y="18.5" text-anchor="middle" font-family="Liberation Mono" font-weight="bold" font-size="8" fill="#000" style="shape-rendering:auto">2</text></svg>
<div id="left" class="a">
</div>
<div class="gb" style="left:5px;top:135px;height:333px;width:188px"></div><div class="gbl" style="left:18px;top:128px">Door/Drawer Editor</div><div class="btn" style="top:148px">Add Right Hinge Door</div><div class="btn" style="top:174px">Add Left Hinge Door</div><div class="btn" style="top:200px">Add Double Door</div><div class="btn" style="top:252px">Add/Locate Pulls</div><div class="btn" style="top:278px">Add Double Left Door</div><div class="btn" style="top:304px">Add Double Right Door</div><div class="btn" style="top:330px">Add Lazy Susan Door</div><div class="btn" style="top:358px">Remove Pull/Location</div><div class="btn" style="top:384px">Delete</div><div class="btn" style="top:410px">Door/Drawer Selection</div><div class="btn" style="top:436px">Drawer Box Selection</div><div id="info" class="a"><div style="top:2px">Cabinet #1</div><div style="top:18px">GARE-7-90-MOD1</div><div style="top:34px">Dir: Cocinas\Modulos</div><div style="top:50px">Melamina</div><div style="top:66px">Type: Corner</div><div style="top:82px">Width: 900mm</div><div style="top:98px">Height: 700mm</div><div style="top:114px">Depth: 600mm</div></div><div class="gb" style="left:3px;top:656px;width:149px;height:42px"></div><div class="gbl" style="left:14px;top:648px">Screen Shade</div><div class="a" style="left:15px;top:675px;width:83px;height:2px;background:#b8b8b8;border-bottom:1px solid #fff;box-sizing:content-box"></div><div class="a" style="left:14px;top:671px;width:7px;height:13px;border:1px solid #8a8a8a;border-radius:2px;background:linear-gradient(90deg,#fff,#e0e0e0)"></div><div class="a" style="left:111px;top:666px;width:32px;height:20px;border:1px solid #2e6a98;border-radius:3px;background:linear-gradient(#e0f0fa 0,#cfe8f8 45%,#90ccee 50%,#78bce6 100%)"><div class="a" style="left:5px;top:1px;width:20px;height:16px;background:linear-gradient(#3a3a44 0,#505058 25%,#909094 55%,#b8b8b8 80%,#fff 81%)"></div></div><div class="a" style="left:161px;top:666px;width:30px;height:20px;border:1px solid #707070;border-radius:3px;background:linear-gradient(#f2f2f2 0,#ebebeb 45%,#dddddd 50%,#cfcfcf 100%);font-size:13.8px;text-align:center;line-height:19px">JPG</div>
<div id="vline" class="a"></div>
<div id="view" class="a"></div>
<svg class="a" style="left:0;top:0" width="1280" height="1024">
<defs>
<filter id="wood" x="0" y="0" width="100%" height="100%" color-interpolation-filters="sRGB">
<feTurbulence type="fractalNoise" baseFrequency="0.22 0.007" numOctaves="4" seed="7" result="n"/>
<feColorMatrix in="n" type="matrix" values="0.15 0 0 0 0.625  0.11 0 0 0 0.375  0.06 0 0 0 0.165  0 0 0 0 1"/>
</filter>
<clipPath id="cl"><rect x="595" y="338" width="135" height="462"/></clipPath>
<clipPath id="cr"><rect x="732" y="338" width="135" height="462"/></clipPath>
</defs>
<rect x="290" y="319" width="882" height="1" fill="#000"/>
<rect x="290" y="320" width="882" height="483" fill="#fff"/>
<rect x="290" y="803" width="882" height="1" fill="#000"/>
<rect x="584" y="319" width="294" height="485" fill="#000"/>
<rect x="585" y="320" width="292" height="483" fill="#cf7535"/>
<rect x="592" y="330" width="278" height="1" fill="#2a0800"/>
<rect x="585" y="336" width="291" height="2" fill="#000"/>
<rect x="593" y="336" width="2" height="466" fill="#000"/>
<rect x="867" y="336" width="2" height="466" fill="#000"/>
<rect x="585" y="800" width="291" height="2" fill="#000"/>
<g clip-path="url(#cl)"><g transform="rotate(16 662 569)"><rect x="420" y="250" width="480" height="640" filter="url(#wood)"/></g></g>
<g clip-path="url(#cr)"><g transform="rotate(-28 799 569)"><rect x="560" y="250" width="480" height="640" filter="url(#wood)"/></g></g>
<rect x="730" y="336" width="2" height="466" fill="#cf7535"/>
<rect x="730" y="341" width="2" height="1" fill="#000"/>
<rect x="730" y="342" width="2" height="450" fill="#fff"/>
<rect x="730" y="792" width="2" height="1" fill="#000"/>
<rect x="585" y="802" width="292" height="1" fill="#c08a68"/>
<rect x="585" y="338" width="1" height="462" fill="#e0a070" opacity=".6"/><rect x="592" y="338" width="1" height="462" fill="#e0a070" opacity=".6"/><rect x="876" y="338" width="1" height="462" fill="#e0a070" opacity=".6"/><rect x="869" y="338" width="1" height="462" fill="#e0a070" opacity=".6"/><rect x="595" y="338" width="1" height="462" fill="#d09060" opacity=".5"/>
</svg>
<div id="sb" class="a"></div><div id="thumb" class="a"><svg class="a" style="left:1px;top:94px" width="10" height="10"><path d="M1.5 1.5 L8 5 L1.5 8.5" fill="none" stroke="#606060" stroke-width="1.1"/></svg></div>
<div id="status" class="a"><div class="a" style="left:205px;top:2px;width:1px;height:18px;background:#c8c8c8"></div><div class="a" style="left:1071px;top:3px;width:1px;height:17px;background:#d0d0d0"></div><div class="t a">F1 for Help (Learning Mode ON)</div></div><div id="sbot" class="a"></div><div class="a" style="left:282px;top:1022px;width:66px;height:2px;background:linear-gradient(#202020 0,#202020 1px,#fff 1px)"></div><div class="a" style="left:352px;top:1022px;width:66px;height:2px;background:linear-gradient(#202020 0,#202020 1px,#fff 1px)"></div>
</body></html>
